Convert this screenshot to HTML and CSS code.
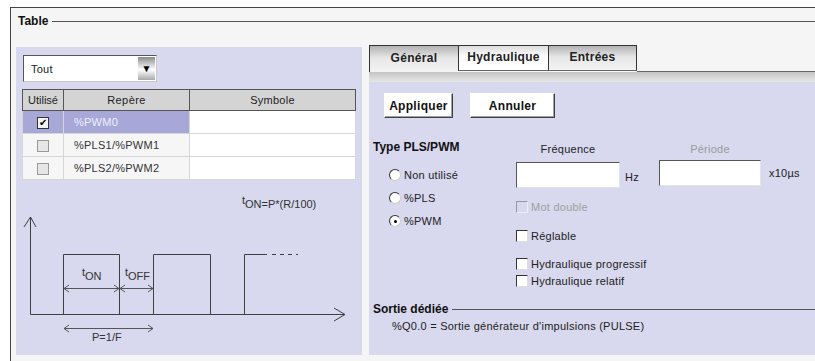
FILE: index.html
```html
<!DOCTYPE html>
<html lang="fr">
<head>
    <meta charset="UTF-8">
    <meta name="viewport" content="width=device-width, initial-scale=1.0">
    <title>Table PLS/PWM</title>
    <link rel="stylesheet" href="styles.css">
</head>
<body>
    <div class="window">
        <div class="group-title"><span>Table</span><i class="rule"></i></div>

        <div class="columns">
            <!-- left: object list and timing diagram -->
            <section class="list-panel">
                <div class="select">
                    <span>Tout</span>
                    <span class="select-btn">&#9660;</span>
                </div>

                <table class="grid">
                    <thead>
                        <tr>
                            <th class="c-used">Utilisé</th>
                            <th class="c-ref">Repère</th>
                            <th>Symbole</th>
                        </tr>
                    </thead>
                    <tbody>
                        <tr class="selected">
                            <td class="c-used"><span class="box checked">&#10004;</span></td>
                            <td class="c-ref">%PWM0</td>
                            <td class="c-sym"></td>
                        </tr>
                        <tr>
                            <td class="c-used"><span class="box"></span></td>
                            <td class="c-ref">%PLS1/%PWM1</td>
                            <td class="c-sym"></td>
                        </tr>
                        <tr>
                            <td class="c-used"><span class="box"></span></td>
                            <td class="c-ref">%PLS2/%PWM2</td>
                            <td class="c-sym"></td>
                        </tr>
                    </tbody>
                </table>

                <svg class="diagram" width="346" height="170" viewBox="0 0 346 170">
                    <g fill="none" stroke="#404040" stroke-width="1">
                        <path d="M14.5 37 V134.5 H329"/>
                        <polyline points="8,47 14.5,37 20,47"/>
                        <polyline points="318,128 329,134.5 318,141"/>
                        <path d="M47.5 134.5 V74.5 H103.5 V134.5"/>
                        <path d="M137.5 134.5 V74.5 H194.5 V134.5"/>
                        <path d="M228.5 134.5 V74.5 H251"/>
                        <path d="M256 74.5 H282" stroke-dasharray="4 4"/>
                    </g>
                    <g fill="none" stroke="#555" stroke-width="1">
                        <path d="M48 108.5 H103 M53 105 L48 108.5 L53 112 M98 105 L103 108.5 L98 112"/>
                        <path d="M104 108.5 H137 M109 105 L104 108.5 L109 112 M132 105 L137 108.5 L132 112"/>
                        <path d="M48 148.5 H137 M53 145 L48 148.5 L53 152 M132 145 L137 148.5 L132 152"/>
                    </g>
                    <g class="dtext">
                        <text x="226" y="24">t<tspan dy="4">ON=P*(R/100)</tspan></text>
                        <text x="66" y="96">t<tspan dy="4">ON</tspan></text>
                        <text x="109" y="96">t<tspan dy="4">OFF</tspan></text>
                        <text x="76" y="161">P=1/F</text>
                    </g>
                </svg>
            </section>

            <!-- right: settings tabs -->
            <section class="detail">
                <div class="tabs">
                    <div class="tab active">Général</div>
                    <div class="tab light">Hydraulique</div>
                    <div class="tab last">Entrées</div>
                    <div class="tab-fill"></div>
                </div>
                <div class="tab-strip"></div>

                <div class="detail-body">
                    <div class="actions">
                        <button class="btn btn-apply">Appliquer</button>
                        <button class="btn btn-cancel">Annuler</button>
                    </div>

                    <div class="config">
                        <div class="type-col">
                            <h3>Type PLS/PWM</h3>
                            <div class="radios">
                                <div class="radio"><span class="dot"></span>Non utilisé</div>
                                <div class="radio"><span class="dot"></span>%PLS</div>
                                <div class="radio"><span class="dot on"></span>%PWM</div>
                            </div>
                        </div>

                        <div class="freq-col">
                            <div class="field-label">Fréquence</div>
                            <div class="field">
                                <span class="input"></span><span class="unit">Hz</span>
                            </div>
                            <div class="check disabled dbl"><span class="cb"></span>Mot double</div>
                            <div class="check adj"><span class="cb"></span>Réglable</div>
                            <div class="check prog"><span class="cb"></span>Hydraulique progressif</div>
                            <div class="check rel"><span class="cb"></span>Hydraulique relatif</div>
                        </div>

                        <div class="period-col">
                            <div class="field-label muted">Période</div>
                            <div class="field">
                                <span class="input"></span><span class="unit">x10µs</span>
                            </div>
                        </div>
                    </div>

                    <div class="sub-title"><span>Sortie dédiée</span><i class="rule"></i></div>
                    <div class="output">%Q0.0 = Sortie générateur d'impulsions (PULSE)</div>
                </div>
            </section>
        </div>
    </div>
</body>
</html>
```

FILE: styles.css
```css
body {
    margin: 0;
    background: #fff;
    font-family: "Liberation Sans", Arial, sans-serif;
    font-size: 11px;
    letter-spacing: 0.25px;
    color: #222;
    overflow: hidden;
}
.window {
    margin: 7px 0 0 10px;
    height: 360px;
    padding-left: 5px;
    border-top: 1px solid #444;
    border-left: 1px solid #444;
    background: #f5f5f5;
}
.group-title,
.sub-title {
    display: flex;
    align-items: center;
    gap: 4px;
    height: 14px;
    font-size: 12px;
    font-weight: bold;
    letter-spacing: 0;
    color: #111;
}
.group-title {
    margin-top: 6px;
    padding-left: 2px;
}
.rule {
    flex: 1;
    border-top: 1px solid #555;
    margin-top: 1px;
}
.columns {
    display: flex;
    align-items: flex-start;
    gap: 7px;
    margin-top: 17px;
}

/* left panel */
.list-panel {
    width: 346px;
    height: 308px;
    margin-top: 2px;
    padding: 8px 6px 0;
    box-sizing: border-box;
    background: #d8d8ee;
}
.select {
    display: flex;
    align-items: center;
    justify-content: space-between;
    width: 134px;
    height: 27px;
    margin-left: 1px;
    padding: 1px 1px 1px 7px;
    box-sizing: border-box;
    background: #fff;
    border: 1px solid;
    border-color: #555 #c8c8c8 #c8c8c8 #555;
}
.select-btn {
    width: 17px;
    height: 23px;
    display: flex;
    align-items: center;
    justify-content: center;
    font-size: 10px;
    color: #000;
    background: linear-gradient(#8a8a8a, #fff 55%, #a8a8a8);
}
.grid {
    width: 334px;
    margin-top: 7px;
    border-collapse: collapse;
    table-layout: fixed;
}
.grid th {
    height: 20px;
    padding: 0;
    font-weight: normal;
    background: #d4d4d4;
    border: 1px solid #555;
    color: #222;
}
.grid th.c-used {
    width: 40px;
    letter-spacing: 0;
}
.grid th.c-ref {
    width: 125px;
    letter-spacing: 0.4px;
}
.grid td {
    height: 22px;
    padding: 0;
    background: #f6f6f6;
    border: 1px solid #d6d6d6;
    color: #333;
}
.grid td.c-used {
    text-align: center;
}
.grid td.c-ref {
    padding-left: 10px;
}
.grid td.c-sym {
    background: #fff;
}
.grid .selected td.c-used,
.grid .selected td.c-ref {
    background: #a8a8d8;
    color: #eef;
}
.box {
    display: inline-block;
    width: 10px;
    height: 10px;
    vertical-align: middle;
    background: #e6e6e6;
    border: 1px solid #999;
    font-size: 10px;
    line-height: 10px;
    letter-spacing: 0;
}
.box.checked {
    background: #f4f4f4;
    border-color: #333;
    color: #000;
}
.diagram {
    display: block;
    margin: 0 -6px;
}
.dtext text {
    font-family: "Liberation Sans", Arial, sans-serif;
    font-size: 11px;
    letter-spacing: 0;
    fill: #333;
}

/* right panel */
.detail {
    flex: 1;
    display: flex;
    flex-direction: column;
    height: 310px;
}
.tabs {
    display: flex;
    height: 27px;
}
.tab {
    width: 88px;
    height: 26px;
    display: flex;
    align-items: center;
    justify-content: center;
    padding-bottom: 3px;
    box-sizing: border-box;
    font-size: 12px;
    font-weight: bold;
    letter-spacing: 0.3px;
    border-top: 1px solid #333;
    border-left: 1px solid #333;
    border-bottom: 1px solid #666;
    background: linear-gradient(#b2b2b2, #e6e6e6 45%, #f4f4f4);
}
.tab.active {
    width: 89px;
    height: 27px;
    border-bottom: none;
}
.tab.light {
    width: 90px;
    background: linear-gradient(#dcdcdc, #fafafa 40%, #fff);
}
.tab.last {
    width: 89px;
    border-right: 1px solid #333;
}
.tab-fill {
    flex: 1;
    height: 26px;
    border-bottom: 1px solid #666;
}
.tab-strip {
    height: 10px;
    background: linear-gradient(#c4c4c4, #e6e6e6);
}
.detail-body {
    flex: 1;
    padding: 11px 0 0 4px;
    background: #d8d8ee;
}
.actions {
    display: flex;
    gap: 17px;
    margin-left: 11px;
}
.btn {
    height: 25px;
    padding: 0;
    font-family: "Liberation Sans", Arial, sans-serif;
    font-size: 12px;
    font-weight: bold;
    letter-spacing: 0.3px;
    color: #111;
    background: #fff;
    border: 1px solid;
    border-color: #fff #404040 #404040 #fff;
    box-shadow: inset -1px -1px 0 #a0a0a0;
}
.btn-apply {
    width: 69px;
}
.btn-cancel {
    width: 85px;
}
.config {
    display: flex;
    margin-top: 22px;
}
.type-col {
    width: 143px;
}
.type-col h3 {
    margin: 0;
    height: 14px;
    line-height: 14px;
    font-size: 12px;
    font-weight: bold;
    letter-spacing: 0;
    color: #111;
}
.radios {
    margin-top: 9px;
    padding-left: 16px;
}
.radio {
    display: flex;
    align-items: center;
    gap: 3px;
    height: 23px;
    color: #222;
}
.dot {
    width: 12px;
    height: 12px;
    border-radius: 50%;
    box-sizing: border-box;
    background: #fff;
    border: 1px solid;
    border-color: #333 #ccc #ccc #333;
    position: relative;
}
.dot.on::after {
    content: "";
    position: absolute;
    left: 4px;
    top: 4px;
    width: 3px;
    height: 3px;
    border-radius: 50%;
    background: #000;
}
.freq-col {
    width: 143px;
}
.field-label {
    width: 104px;
    margin-top: 2px;
    height: 14px;
    line-height: 14px;
    text-align: center;
    color: #222;
}
.field-label.muted {
    width: 102px;
    color: #9a9a9a;
}
.field {
    display: flex;
    align-items: center;
    margin-top: 6px;
}
.input {
    width: 104px;
    height: 26px;
    box-sizing: border-box;
    background: #fff;
    border: 1px solid;
    border-color: #555 #e4e4e4 #e4e4e4 #555;
}
.unit {
    margin-left: 5px;
    margin-top: 3px;
}
.period-col .field {
    margin-top: 4px;
}
.period-col .input {
    width: 102px;
}
.period-col .unit {
    margin-left: 8px;
    margin-top: 0;
}
.check {
    display: flex;
    align-items: center;
    gap: 3px;
    height: 14px;
    color: #222;
}
.cb {
    width: 12px;
    height: 12px;
    box-sizing: border-box;
    background: #fff;
    border: 1px solid;
    border-color: #333 #ddd #ddd #333;
}
.check.disabled {
    color: #a0a0a0;
}
.check.disabled .cb {
    background: #d8d8ee;
    border-color: #999 #eee #eee #999;
}
.check.dbl {
    margin-top: 12px;
}
.check.adj {
    margin-top: 15px;
}
.check.prog {
    margin-top: 14px;
}
.check.rel {
    margin-top: 3px;
}
.sub-title {
    margin-top: 14px;
}
.output {
    margin-top: 3px;
    padding-left: 19px;
    height: 14px;
    line-height: 14px;
    color: #222;
}
```
